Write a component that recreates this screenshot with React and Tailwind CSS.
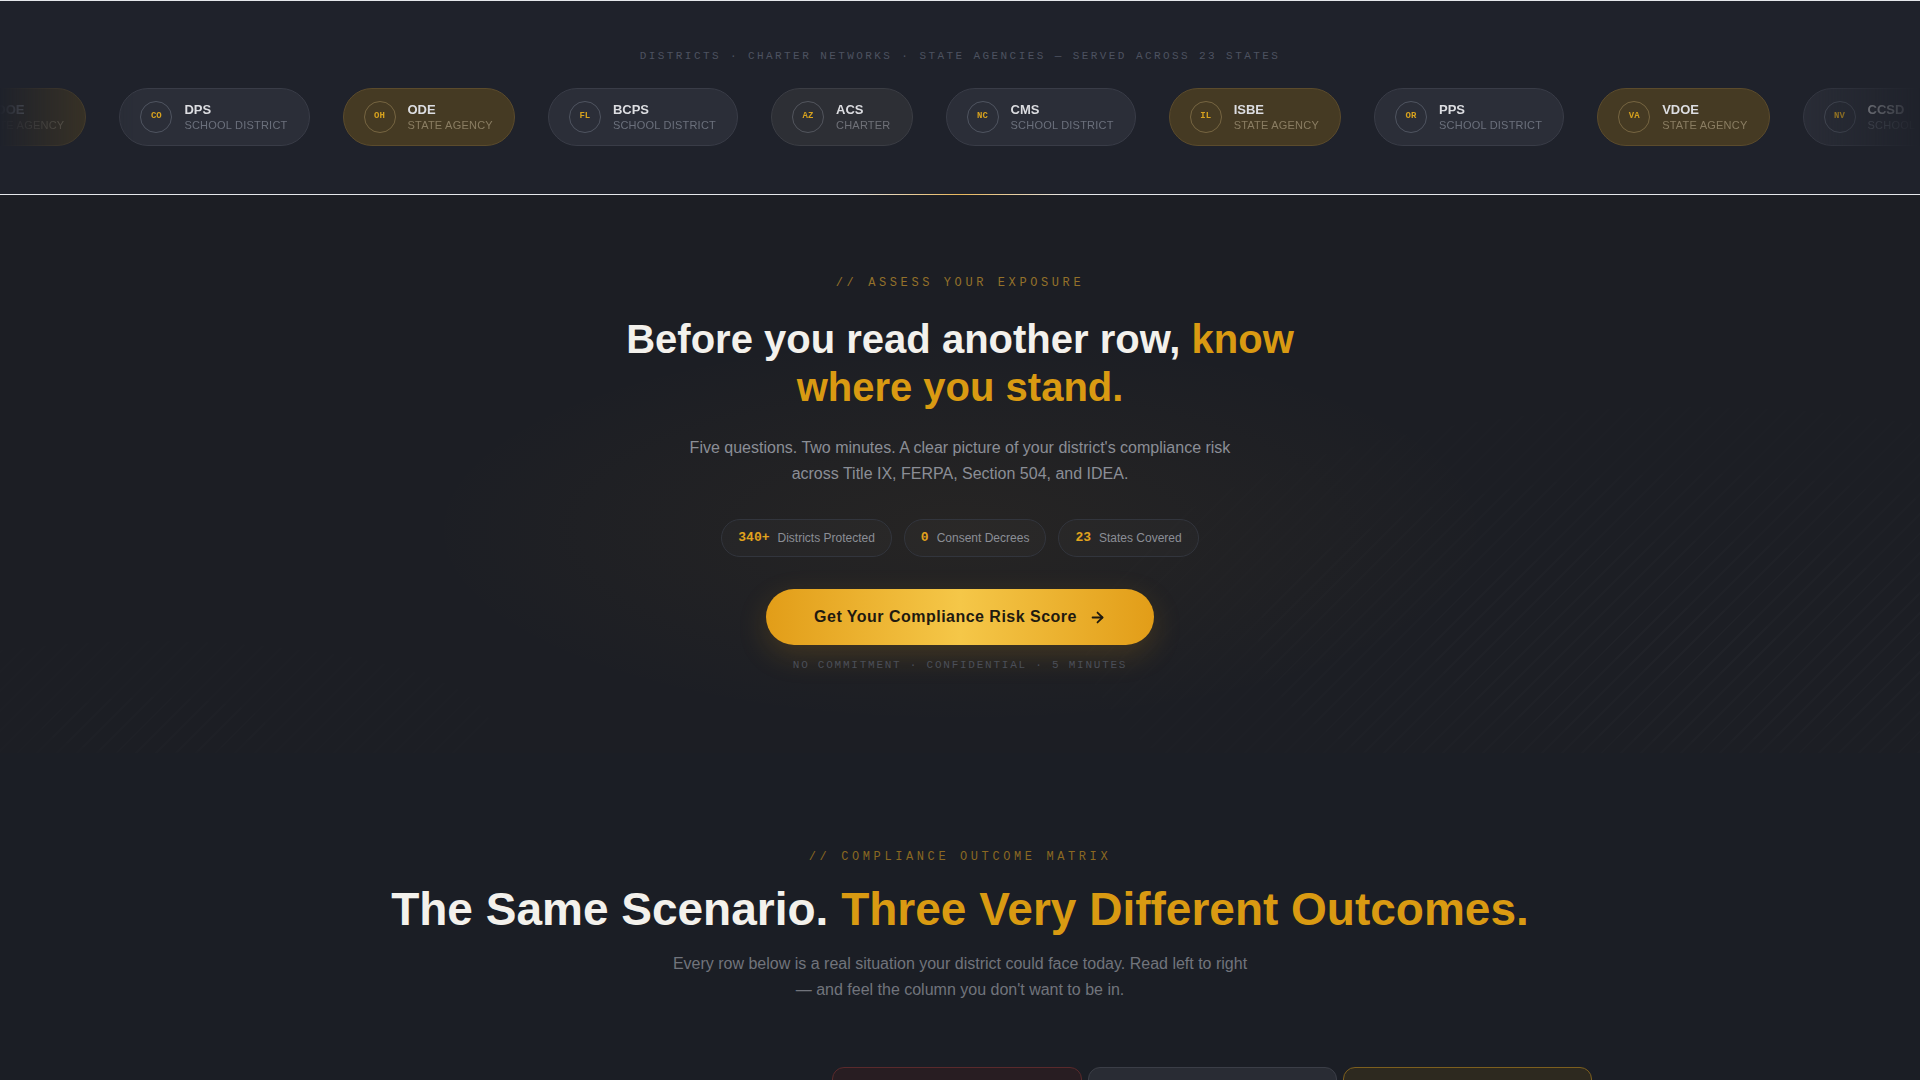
import { ArrowRight } from 'lucide-react';

const orgs = [
  { code: 'TN', name: 'TNDOE', kind: 'State Agency' },
  { code: 'CO', name: 'DPS', kind: 'School District' },
  { code: 'OH', name: 'ODE', kind: 'State Agency' },
  { code: 'FL', name: 'BCPS', kind: 'School District' },
  { code: 'AZ', name: 'ACS', kind: 'Charter' },
  { code: 'NC', name: 'CMS', kind: 'School District' },
  { code: 'IL', name: 'ISBE', kind: 'State Agency' },
  { code: 'OR', name: 'PPS', kind: 'School District' },
  { code: 'VA', name: 'VDOE', kind: 'State Agency' },
  { code: 'NV', name: 'CCSD', kind: 'School District' },
  { code: 'TX', name: 'TEA', kind: 'State Agency' },
];

const kindStyles = {
  'School District': {
    pill: 'bg-[#2b2e38] border-[#393c47]',
    ring: 'border-[#4f5460]',
    sub: 'text-[#6b707c]',
  },
  'State Agency': {
    pill: 'bg-[#453a23] border-[#5b4b2c]',
    ring: 'border-[#766541]',
    sub: 'text-[#8a7d62]',
  },
  Charter: {
    pill: 'bg-[#2d2f35] border-[#3b3d44]',
    ring: 'border-[#52555d]',
    sub: 'text-[#6f7178]',
  },
};

const stats = [
  { value: '340+', label: 'Districts Protected' },
  { value: '0', label: 'Consent Decrees' },
  { value: '23', label: 'States Covered' },
];

const OrgPill = ({ org }) => {
  const s = kindStyles[org.kind];
  return (
    <div className={`flex shrink-0 items-center gap-3 rounded-full border py-3 pl-5 pr-[21px] ${s.pill}`}>
      <div className={`flex h-8 w-8 items-center justify-center rounded-full border font-['Liberation_Mono',monospace] text-[9px] font-bold text-[#d6a11e] ${s.ring}`}>
        {org.code}
      </div>
      <div className="text-left">
        <div className="text-[13px] font-bold leading-[17px] text-[#dcdde1]">{org.name}</div>
        <div className={`text-[11px] uppercase leading-[15px] tracking-[0.02em] ${s.sub}`}>{org.kind}</div>
      </div>
    </div>
  );
};

export default function App() {
  return (
    <div className="h-screen overflow-hidden bg-[#1b1e25] font-['Liberation_Sans',Arial,sans-serif] text-[#f3f1ec]">
      {/* Trusted-by strip */}
      <section className="relative border-y border-[#e5e7eb] bg-[#1f222b] pt-[47px] pb-12">
        <p className="text-center font-['Liberation_Mono',monospace] text-[11px] leading-4 uppercase tracking-[0.22em] text-[#4d5260]">
          Districts · Charter Networks · State Agencies — Served across 23 states
        </p>
        <div className="mt-6 overflow-hidden [mask-image:linear-gradient(to_right,transparent,black_7%,black_93%,transparent)]">
          <div className="-ml-[86px] flex gap-[33px]">
            {orgs.map((org, i) => (
              <OrgPill key={i} org={org} />
            ))}
          </div>
        </div>
        <div className="pointer-events-none absolute -bottom-px left-1/2 h-px w-[220px] -translate-x-1/2 bg-[linear-gradient(90deg,transparent,#e7b65a_50%,transparent)]" />
      </section>

      {/* Assessment hero */}
      <section className="relative overflow-hidden bg-[#1c1e24] px-6 py-20 text-center">
        <div className="pointer-events-none absolute inset-0 bg-[radial-gradient(ellipse_40%_50%_at_50%_60%,rgba(214,150,30,0.055),transparent_70%)]" />
        <div className="pointer-events-none absolute inset-0 bg-[repeating-linear-gradient(135deg,rgba(255,255,255,0.018)_0px,rgba(255,255,255,0.018)_2px,transparent_2px,transparent_14px)] [mask-image:radial-gradient(ellipse_45%_60%_at_88%_80%,black,transparent),radial-gradient(ellipse_35%_30%_at_8%_95%,rgba(0,0,0,0.6),transparent)]" />
        <div className="relative mx-auto flex max-w-3xl flex-col items-center">
          <p className="font-['Liberation_Mono',monospace] text-xs leading-4 tracking-[0.3em] text-[#94712a]">
            {'// ASSESS YOUR EXPOSURE'}
          </p>
          <h1 className="mt-6 max-w-[720px] text-[40px] font-bold leading-[48px] text-[#f3f1ec]">
            Before you read another row, <span className="text-[#d99a12]">know where you stand.</span>
          </h1>
          <p className="mt-6 max-w-xl text-base leading-[26px] text-[#8b8e96]">
            Five questions. Two minutes. A clear picture of your district's compliance risk across Title IX, FERPA,
            Section 504, and IDEA.
          </p>
          <div className="mt-8 flex gap-3">
            {stats.map((s) => (
              <div
                key={s.label}
                className="flex h-[38px] items-center gap-2 rounded-full border border-[#32353d] bg-white/[0.02] px-4"
              >
                <span className="font-['Liberation_Mono',monospace] text-[13px] font-bold text-[#e1a31d]">{s.value}</span>
                <span className="text-xs text-[#8b8e96]">{s.label}</span>
              </div>
            ))}
          </div>
          <button className="mt-8 flex h-14 items-center gap-3 rounded-full bg-[linear-gradient(90deg,#e29d18,#f5c748_50%,#e29d18)] px-12 text-base font-bold tracking-[0.03em] text-[#1f1a10] shadow-[0_10px_30px_rgba(226,157,24,0.18)]">
            Get Your Compliance Risk Score
            <ArrowRight size={17} strokeWidth={2.5} />
          </button>
          <p className="mt-3 font-['Liberation_Mono',monospace] text-[11px] leading-4 tracking-[0.16em] text-[#4b4f58]">
            NO COMMITMENT · CONFIDENTIAL · 5 MINUTES
          </p>
        </div>
      </section>

      {/* Outcome matrix intro */}
      <section className="bg-[#1b1e25] px-6 pt-24 text-center">
        <p className="font-['Liberation_Mono',monospace] text-xs leading-4 tracking-[0.3em] text-[#8a6822]">
          {'// COMPLIANCE OUTCOME MATRIX'}
        </p>
        <h2 className="mt-4 text-[46px] font-bold leading-[56px] text-[#f3f1ec]">
          The Same Scenario. <span className="text-[#d99a12]">Three Very Different Outcomes.</span>
        </h2>
        <p className="mx-auto mt-3.5 max-w-xl text-base leading-[26px] text-[#71747c]">
          Every row below is a real situation your district could face today. Read left to right — and feel the column
          you don't want to be in.
        </p>
        <div className="mx-auto mt-16 grid max-w-[1264px] grid-cols-[2fr_1fr_1fr_1fr] gap-1.5">
          <div />
          <div className="h-24 rounded-t-xl border border-[#5a2a2c] bg-[#281d22]" />
          <div className="h-24 rounded-t-xl border border-[#3b3e47] bg-[#292c34]" />
          <div className="h-24 rounded-t-xl border border-[#7d5f1e] bg-[#2d291f]" />
        </div>
      </section>
    </div>
  );
}
